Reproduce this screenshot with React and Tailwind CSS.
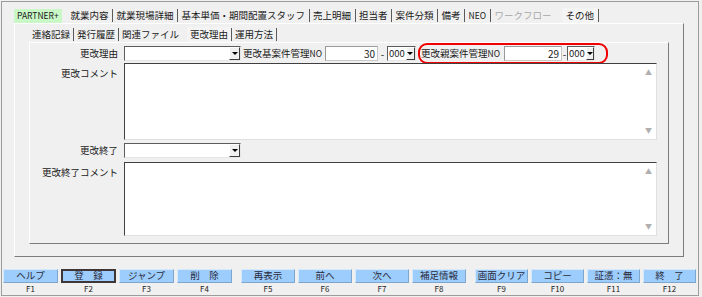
// App.jsx
const FONT = "font-['Noto_Sans_CJK_JP','Noto_Sans',sans-serif]";

const topTabs = [
  { label: "就業内容" },
  { label: "就業現場詳細" },
  { label: "基本単価・期間配置スタッフ" },
  { label: "売上明細" },
  { label: "担当者" },
  { label: "案件分類" },
  { label: "備考" },
  { label: "NEO" },
];

const subTabs = ["連絡記録", "発行履歴", "関連ファイル"];

const groups = [
  {
    width: "w-[55px]",
    items: [
      { label: "ヘルプ", key: "F1" },
      { label: "登　録", key: "F2", active: true },
      { label: "ジャンプ", key: "F3" },
      { label: "削　除", key: "F4" },
    ],
  },
  {
    width: "w-[54px]",
    items: [
      { label: "再表示", key: "F5" },
      { label: "前へ", key: "F6" },
      { label: "次へ", key: "F7" },
      { label: "補足情報", key: "F8" },
    ],
  },
  {
    width: "w-[53px]",
    items: [
      { label: "画面クリア", key: "F9" },
      { label: "コピー", key: "F10" },
      { label: "証憑：無", key: "F11" },
      { label: "終　了", key: "F12" },
    ],
  },
];

const Sep = () => <span className="w-px h-[13px] bg-[#5a5a5a]" />;

const DropButton = () => (
  <div className="w-[11px] h-full bg-[#f0f0f0] border-t border-l border-white border-r border-b border-r-[#3c3c3c] border-b-[#3c3c3c] flex items-center justify-center">
    <span className="w-0 h-0 border-l-[3px] border-r-[3px] border-t-[3px] border-l-transparent border-r-transparent border-t-black" />
  </div>
);

const Select = ({ width, value }) => (
  <div
    className={`${width} h-[15px] flex bg-white border-t border-l border-[#5c5c5c] border-r border-b border-r-[#e6e6e6] border-b-[#e6e6e6]`}
  >
    <div className="flex-1 px-[1px] text-[9.5px] leading-[13px] text-[#222]">{value}</div>
    <DropButton />
  </div>
);

const NumInput = ({ width, value }) => (
  <div
    className={`${width} h-[15px] bg-white border border-[#c8c8c8] border-t-[#9a9a9a] border-l-[#9a9a9a] text-right pr-[2px] text-[10px] leading-[13px] text-[#222]`}
  >
    {value}
  </div>
);

const TextArea = ({ height }) => (
  <div
    className={`${height} w-[533px] flex bg-white border-t border-l border-[#404040] border-r border-b border-r-[#e0e0e0] border-b-[#e0e0e0]`}
  >
    <div className="flex-1" />
    <div className="w-[15px] flex flex-col items-center justify-between py-[5px] text-[7px] leading-none text-[#b0b0b0]">
      <span>▲</span>
      <span>▼</span>
    </div>
  </div>
);

const Label = ({ children, top }) => (
  <div
    className={`w-[88px] mr-[6px] text-right text-[9.5px] leading-[15px] text-[#1a1a1a] ${top ? "pt-[3px]" : ""}`}
  >
    {children}
  </div>
);

export default function App() {
  return (
    <div className={`w-[702px] h-[297px] bg-[#f0f0f0] pt-px pl-px ${FONT}`}>
      <div className="w-[698px] h-[295px] border border-[#9c9c9c] flex flex-col">
        {/* main tabs */}
        <div className="mt-[6px] ml-[12px] h-[15px] flex items-center text-[9.5px] leading-none text-[#1a1a1a]">
          <span className="h-[14px] w-[48px] bg-[#c9f7c6] flex items-center pl-[3px] text-[8.5px]">
            PARTNER+
          </span>
          <span className="w-[5px]" />
          {topTabs.map((t) => (
            <div key={t.label} className="flex items-center">
              <span className={`px-[3.5px] ${t.label === "NEO" ? "text-[8.5px]" : ""}`}>{t.label}</span>
              <Sep />
            </div>
          ))}
          <span className="px-[4px] text-[#a8a8a8]">ワークフロー</span>
          <span className="ml-[6px] h-[15px] px-[4px] bg-[#f4f4f4] flex items-center">その他</span>
          <Sep />
        </div>

        {/* outer panel */}
        <div className="ml-[12px] w-[670px] h-[234px] border-t border-l border-white border-r border-b border-r-[#7c7c7c] border-b-[#7c7c7c] flex flex-col">
          <div className="mt-[3px] ml-[14px] h-[15px] flex items-center text-[9.5px] leading-none text-[#1a1a1a]">
            {subTabs.map((t, i) => (
              <div key={t} className="flex items-center">
                <span className="px-[3px]">{t}</span>
                {i < 2 && <Sep />}
              </div>
            ))}
            <span className="ml-[5px] px-[3px] h-[15px] bg-[#f4f4f4] flex items-center">更改理由</span>
            <Sep />
            <span className="px-[3px]">運用方法</span>
            <Sep />
          </div>

          {/* inner panel */}
          <div className="ml-[14px] w-[640px] h-[202px] border-t border-l border-white border-r border-b border-r-[#7c7c7c] border-b-[#7c7c7c] pt-[3px] flex flex-col">
            <div className="flex items-center h-[15px]">
              <Label>更改理由</Label>
              <Select width="w-[117px]" value="" />
              <span className="ml-[2px] w-[80px] text-[9.5px] leading-none text-[#1a1a1a] whitespace-nowrap">
                更改基案件管理<span className="text-[8.5px]">NO</span>
              </span>
              <div className="ml-[2px]">
                <NumInput width="w-[53px]" value="30" />
              </div>
              <span className="w-[9px] text-center text-[10px] leading-none text-[#222]">-</span>
              <Select width="w-[29px]" value="000" />
              <div className="ml-[2px] -my-[3px] py-[1px] pl-[1px] pr-[11px] border-[2.5px] border-[#f00000] rounded-[9px] flex items-center">
                <span className="w-[83px] text-[9.5px] leading-none text-[#1a1a1a] whitespace-nowrap">
                  更改親案件管理<span className="text-[8.5px]">NO</span>
                </span>
                <NumInput width="w-[58px]" value="29" />
                <span className="w-[5px] text-center text-[10px] leading-none text-[#222]">-</span>
                <Select width="w-[28px]" value="000" />
              </div>
            </div>

            <div className="mt-[2px] flex items-start">
              <Label top>更改コメント</Label>
              <TextArea height="h-[77px]" />
            </div>

            <div className="mt-[3px] flex items-center h-[15px]">
              <Label>更改終了</Label>
              <Select width="w-[117px]" value="" />
            </div>

            <div className="mt-[4px] flex items-start">
              <Label top>更改終了コメント</Label>
              <TextArea height="h-[74px]" />
            </div>
          </div>
        </div>

        {/* function keys */}
        <div className="mt-[12px] ml-px flex gap-[9px]">
          {groups.map((g, gi) => (
            <div key={gi} className="flex gap-[3px]">
              {g.items.map((b) => (
                <div key={b.key} className={`${g.width} flex flex-col items-center`}>
                  <div
                    className={`w-full h-[14px] bg-[#9ccdfc] flex items-center justify-center text-[9.5px] leading-none text-[#2a2a3a] ${
                      b.active
                        ? "border-2 border-[#3e3636]"
                        : "border border-t-[#d6e9fb] border-l-[#d6e9fb] border-r-[#7ea6cc] border-b-[#7ea6cc]"
                    }`}
                  >
                    {b.label}
                  </div>
                  <div className="h-[11px] text-[8px] leading-[11px] text-[#222]">{b.key}</div>
                </div>
              ))}
            </div>
          ))}
        </div>
      </div>
    </div>
  );
}
